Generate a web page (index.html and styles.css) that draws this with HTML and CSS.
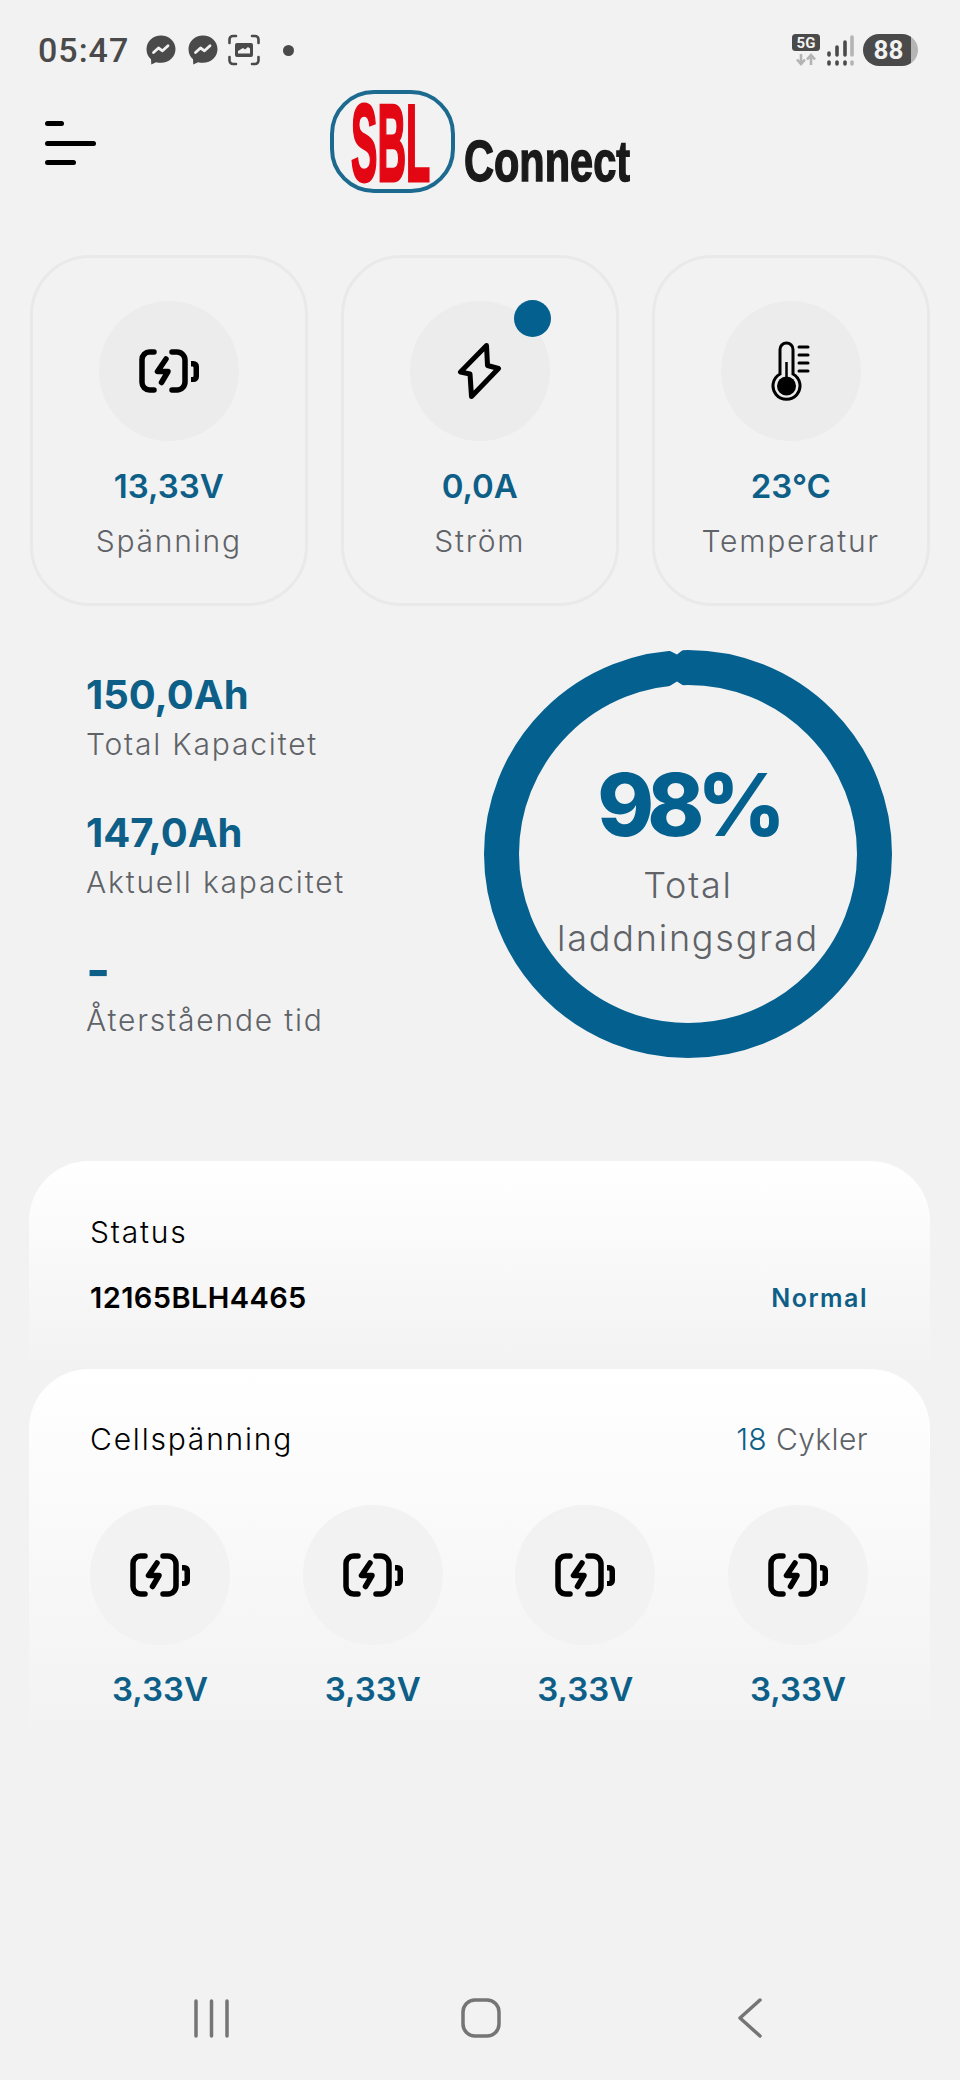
FILE: index.html
```html
<!DOCTYPE html>
<html lang="sv">
<head>
    <meta charset="UTF-8">
    <meta name="viewport" content="width=device-width, initial-scale=1.0">
    <title>SBL Connect</title>
    <link rel="stylesheet" href="styles.css">
</head>
<body>
    <svg class="defs" width="0" height="0">
        <symbol id="battery" viewBox="0 0 60 44">
            <g fill="none" stroke="#000" stroke-width="5.500" stroke-linecap="round" stroke-linejoin="round">
                <path d="M15 3H10.500A7.500 7.500 0 0 0 3 10.500V33.500A7.500 7.500 0 0 0 10.500 41H15"/>
                <path d="M33 3H38A8 8 0 0 1 46 11V33A8 8 0 0 1 38 41H33"/>
                <path d="M27 10L18.500 22.500H29L22.500 33.500"/>
            </g>
            <path d="M52 12h2.500a5.500 5.500 0 0 1 5.500 5.500v10a5.500 5.500 0 0 1-5.500 5.500H52v-5h1.500a1 1 0 0 0 1-1v-8.500a1 1 0 0 0-1-1H52z"/>
        </symbol>
        <symbol id="messenger" viewBox="0 0 30 30">
            <path fill="#4a4a4a" d="M15 0.500C6.800 0.500 0.500 6.500 0.500 14.200c0 4.100 1.700 7.600 4.500 10l0.300 5.300 4.800-2.300c1.500 0.400 3.100 0.600 4.900 0.600 8.200 0 14.500-6 14.500-13.700S23.200 0.500 15 0.500z"/>
            <path fill="none" stroke="#f2f2f2" stroke-width="2.800" stroke-linecap="round" stroke-linejoin="round" d="M7.500 17.500l5-4.500 4 2.800 5.500-5"/>
        </symbol>
    </svg>

    <div class="status-bar">
        <span class="clock">05:47</span>
        <svg class="msg-icon"><use href="#messenger"/></svg>
        <svg class="msg-icon"><use href="#messenger"/></svg>
        <svg class="shot-icon" viewBox="0 0 32 32">
            <g fill="none" stroke="#4a4a4a" stroke-width="2.600" stroke-linecap="round">
                <path d="M8 2H5A3.500 3.500 0 0 0 1.500 5.500V9"/>
                <path d="M24 2H27A3.500 3.500 0 0 1 30.500 5.500V9"/>
                <path d="M8 30H5A3.500 3.500 0 0 1 1.500 26.500V23"/>
                <path d="M24 30H27A3.500 3.500 0 0 0 30.500 26.500V23"/>
            </g>
            <path fill="#4a4a4a" fill-rule="evenodd" d="M9 9h14a2 2 0 0 1 2 2v10a2 2 0 0 1-2 2H9a2 2 0 0 1-2-2V11a2 2 0 0 1 2-2zm1 10.500h12v-5l-2-1.500-3 2.500-2-1.500-5 3z"/>
        </svg>
        <span class="dot"></span>
        <span class="status-right">
            <svg class="net-icon" viewBox="0 0 28 32">
                <rect width="28" height="17" rx="3.500" fill="#4a4a4a"/>
                <text x="14" y="14" text-anchor="middle" class="net-text">5G</text>
                <path fill="none" stroke="#b4b4b4" stroke-width="2.600" d="M9 20v10M5 25.500l4 4.500 4-4.500M19 31V21M15 25.500l4-4.500 4 4.500"/>
            </svg>
            <svg class="signal-icon" viewBox="0 0 28 31">
                <g fill="none" stroke-width="3.600" stroke-linecap="round">
                    <path stroke="#4a4a4a" d="M3 18v2M3 27v2M11 12v8M11 27v2M19 7v13M19 27v2"/>
                    <path stroke="#b4b4b4" d="M26 2v18M26 27v2"/>
                </g>
            </svg>
            <span class="battery-pill">88</span>
        </span>
    </div>

    <header class="app-header">
        <div class="menu-btn">
            <span class="menu-line short"></span>
            <span class="menu-line"></span>
            <span class="menu-line mid"></span>
        </div>
        <svg class="logo" viewBox="0 -12 300 130">
            <rect x="2" y="2" width="121" height="99" rx="42" fill="none" stroke="#1c6a8f" stroke-width="4"/>
            <text transform="translate(21 91) scale(0.36 1)" class="logo-sbl">SBL</text>
            <text transform="translate(134 91) scale(0.716 1)" class="logo-connect">Connect</text>
        </svg>
    </header>

    <section class="cards">
        <div class="card">
            <div class="icon-circle"><svg class="battery-icon"><use href="#battery"/></svg></div>
            <div class="card-value">13,33V</div>
            <div class="card-label">Spänning</div>
        </div>
        <div class="card">
            <span class="badge"></span>
            <div class="icon-circle">
                <svg class="bolt-icon" viewBox="0 0 45 60">
                    <path fill="none" stroke="#000" stroke-width="5" stroke-linejoin="round" d="M29.500 4.500L3.500 31 13 33 14.500 55.500 41.500 27.500 30.500 24.500z"/>
                </svg>
            </div>
            <div class="card-value">0,0A</div>
            <div class="card-label">Ström</div>
        </div>
        <div class="card">
            <div class="icon-circle">
                <svg class="temp-icon" viewBox="0 0 39 60">
                    <path fill="none" stroke="#000" stroke-width="3" d="M9 33V8.500a6.500 6.500 0 0 1 13 0V33a13.500 13.500 0 1 1-13 0z"/>
                    <circle cx="15.500" cy="45" r="9.500"/>
                    <path stroke="#000" stroke-width="2.500" d="M15.500 21V40"/>
                    <path stroke="#000" stroke-width="3" stroke-linecap="round" d="M28 6h9M28 14h9M28 22h9M28 30h9"/>
                </svg>
            </div>
            <div class="card-value">23°C</div>
            <div class="card-label">Temperatur</div>
        </div>
    </section>

    <section class="overview">
        <div class="stats">
            <div class="stat">
                <div class="stat-value">150,0Ah</div>
                <div class="stat-label">Total Kapacitet</div>
            </div>
            <div class="stat">
                <div class="stat-value">147,0Ah</div>
                <div class="stat-label">Aktuell kapacitet</div>
            </div>
            <div class="stat">
                <div class="stat-value stat-empty">-</div>
                <div class="stat-label">Återstående tid</div>
            </div>
        </div>
        <div class="ring">
            <svg class="ring-svg" viewBox="0 0 408 408">
                <circle cx="204" cy="204" r="186.500" fill="none" stroke="#03608f" stroke-width="35"/>
                <path fill="#f2f2f2" d="M182 -1L193 4.500 200 -1zM184 37L193 31.500 200 36 200 40 184 40z"/>
            </svg>
            <div class="ring-value">98%</div>
            <div class="ring-label">Total<br>laddningsgrad</div>
        </div>
    </section>

    <section class="panel status-panel">
        <div class="panel-title">Status</div>
        <div class="panel-row">
            <span class="serial">12165BLH4465</span>
            <span class="state">Normal</span>
        </div>
    </section>

    <section class="panel cell-panel">
        <div class="panel-row cell-head">
            <span class="panel-title">Cellspänning</span>
            <span class="cycles"><span class="cycles-num">18</span> Cykler</span>
        </div>
        <div class="cells">
            <div class="cell">
                <div class="icon-circle light"><svg class="battery-icon"><use href="#battery"/></svg></div>
                <div class="cell-value">3,33V</div>
            </div>
            <div class="cell">
                <div class="icon-circle light"><svg class="battery-icon"><use href="#battery"/></svg></div>
                <div class="cell-value">3,33V</div>
            </div>
            <div class="cell">
                <div class="icon-circle light"><svg class="battery-icon"><use href="#battery"/></svg></div>
                <div class="cell-value">3,33V</div>
            </div>
            <div class="cell">
                <div class="icon-circle light"><svg class="battery-icon"><use href="#battery"/></svg></div>
                <div class="cell-value">3,33V</div>
            </div>
        </div>
    </section>

    <nav class="nav-bar">
        <svg class="nav-recent" viewBox="0 0 37 40">
            <path fill="none" stroke="#757575" stroke-width="3.500" stroke-linecap="round" d="M3 3V38M18.500 3V38M34 3V38"/>
        </svg>
        <svg class="nav-home" viewBox="0 0 40 40">
            <rect x="2" y="2" width="36" height="36" rx="12" fill="none" stroke="#757575" stroke-width="3.500"/>
        </svg>
        <svg class="nav-back" viewBox="0 0 32 40">
            <path fill="none" stroke="#757575" stroke-width="3.500" stroke-linecap="round" stroke-linejoin="round" d="M28 2L8 20 28 38"/>
        </svg>
    </nav>
</body>
</html>
```
FILE: styles.css
```css
* {
    box-sizing: border-box;
}
body {
    margin: 0;
    width: 960px;
    height: 2080px;
    display: flex;
    flex-direction: column;
    background-color: #f2f2f2;
    font-family: Inter, "Open Sans", sans-serif;
    overflow: hidden;
}
.defs {
    position: absolute;
}
.status-bar {
    height: 66px;
    padding: 34px 42px 0 38px;
    display: flex;
    align-items: center;
    color: #4a4a4a;
}
.clock {
    font-family: Roboto, sans-serif;
    font-size: 34px;
    font-weight: 500;
    letter-spacing: 1px;
    width: 90px;
    line-height: 32px;
}
.msg-icon {
    width: 30px;
    height: 30px;
    margin-left: 18px;
}
.msg-icon + .msg-icon {
    margin-left: 12px;
}
.shot-icon {
    width: 32px;
    height: 32px;
    margin-left: 10px;
}
.dot {
    width: 11px;
    height: 11px;
    margin-left: 23px;
    border-radius: 50%;
    background-color: #4a4a4a;
}
.status-right {
    margin-left: auto;
    display: flex;
    align-items: center;
}
.net-icon {
    width: 28px;
    height: 32px;
}
.net-text {
    font-family: Roboto, sans-serif;
    font-size: 15px;
    font-weight: 700;
    fill: #f2f2f2;
}
.signal-icon {
    width: 28px;
    height: 31px;
    margin-left: 6px;
}
.battery-pill {
    width: 55px;
    height: 32px;
    margin-left: 9px;
    padding-right: 4px;
    border-radius: 16px;
    background: linear-gradient(to right, #4a4a4a 87%, #b5b5b5 87%);
    color: #f2f2f2;
    font-family: Roboto, sans-serif;
    font-size: 26px;
    font-weight: 700;
    line-height: 32px;
    text-align: center;
}
.app-header {
    margin-top: 24px;
    height: 103px;
    padding-left: 45px;
    display: flex;
    align-items: flex-start;
    gap: 234px;
}
.menu-btn {
    width: 51px;
    padding-top: 31px;
    display: flex;
    flex-direction: column;
    gap: 14.500px;
}
.menu-line {
    display: block;
    width: 51px;
    height: 5px;
    border-radius: 3px;
    background-color: #000;
}
.menu-line.short {
    width: 19px;
}
.menu-line.mid {
    width: 31px;
}
.logo {
    width: 300px;
    height: 130px;
    margin-top: -12px;
}
.logo-sbl {
    font-family: "Liberation Sans", sans-serif;
    font-size: 110px;
    font-weight: 700;
    fill: #e30613;
    stroke: #e30613;
    stroke-width: 3px;
}
.logo-connect {
    font-family: "Liberation Sans", sans-serif;
    font-size: 58px;
    font-weight: 700;
    fill: #1a1a1a;
    stroke: #1a1a1a;
    stroke-width: 1.500px;
}
.cards {
    margin-top: 62px;
    padding-left: 30px;
    display: grid;
    grid-template-columns: repeat(3, 277.500px);
    gap: 33.500px;
}
.card {
    position: relative;
    height: 351px;
    padding-top: 43px;
    border: 3px solid #e9e9e9;
    border-radius: 60px;
    display: flex;
    flex-direction: column;
    align-items: center;
}
.icon-circle {
    width: 140px;
    height: 140px;
    border-radius: 50%;
    background-color: #ececec;
    display: flex;
    align-items: center;
    justify-content: center;
}
.icon-circle.light {
    background-color: #f2f2f2;
}
.battery-icon {
    width: 60px;
    height: 44px;
}
.bolt-icon {
    width: 45px;
    height: 60px;
}
.temp-icon {
    width: 39px;
    height: 60px;
}
.badge {
    position: absolute;
    top: 42px;
    right: 65px;
    width: 37px;
    height: 37px;
    border-radius: 50%;
    background-color: #03608f;
}
.card-value {
    margin-top: 23px;
    font-size: 33px;
    font-weight: 600;
    line-height: 44px;
    color: #0d5f88;
}
.card-label {
    margin-top: 13px;
    font-size: 30px;
    font-weight: 300;
    letter-spacing: 1.800px;
    line-height: 40px;
    color: #5f6368;
}
.overview {
    margin-top: 44px;
    padding-left: 86px;
    height: 408px;
    display: flex;
    justify-content: space-between;
    padding-right: 68px;
}
.stats {
    padding-top: 17px;
}
.stat {
    height: 138px;
}
.stat-value {
    font-size: 40px;
    font-weight: 700;
    line-height: 56px;
    color: #0d5f88;
}
.stat-empty {
    font-size: 52px;
    font-weight: 700;
}
.stat-label {
    margin-top: 1px;
    font-size: 30px;
    font-weight: 300;
    letter-spacing: 1.800px;
    line-height: 40px;
    color: #5f6368;
}
.ring {
    position: relative;
    width: 408px;
    height: 408px;
    padding-top: 105px;
    text-align: center;
}
.ring-svg {
    position: absolute;
    top: 0;
    left: 0;
    width: 408px;
    height: 408px;
}
.ring-value {
    position: relative;
    font-size: 86px;
    font-weight: 800;
    letter-spacing: -7px;
    line-height: 100px;
    color: #03608f;
}
.ring-label {
    position: relative;
    margin-top: 4px;
    font-size: 36px;
    font-weight: 300;
    letter-spacing: 1.800px;
    line-height: 53px;
    color: #5f6368;
}
.panel {
    margin: 0 30px 0 29px;
    padding: 0 62px 0 61px;
    border-radius: 60px 60px 0 0;
    background: linear-gradient(to bottom, #fff 0%, #f2f2f2 100%);
}
.status-panel {
    margin-top: 103px;
    height: 208px;
    padding-top: 51px;
}
.cell-panel {
    height: 371px;
    padding-top: 50px;
}
.panel-title {
    font-size: 30px;
    font-weight: 300;
    letter-spacing: 1.800px;
    line-height: 40px;
    color: #000;
}
.panel-row {
    margin-top: 26px;
    display: flex;
    justify-content: space-between;
    align-items: center;
    line-height: 40px;
}
.cell-head {
    margin-top: 0;
}
.serial {
    font-size: 29px;
    font-weight: 600;
    letter-spacing: 0.400px;
    color: #000;
}
.state {
    font-size: 25px;
    font-weight: 600;
    letter-spacing: 1.500px;
    color: #0d5f88;
}
.cycles {
    font-size: 30px;
    font-weight: 300;
    letter-spacing: 0.400px;
    color: #5f6368;
}
.cycles-num {
    color: #0d5f88;
}
.cells {
    margin-top: 46px;
    display: flex;
    justify-content: space-between;
}
.cell {
    width: 140px;
    text-align: center;
}
.cell-value {
    margin-top: 24px;
    font-size: 33px;
    font-weight: 600;
    line-height: 40px;
    color: #0d5f88;
}
.nav-bar {
    margin-top: auto;
    padding: 0 0 42px 193px;
    display: flex;
    align-items: center;
}
.nav-recent {
    width: 37px;
    height: 40px;
}
.nav-home {
    width: 40px;
    height: 40px;
    margin-left: 231px;
}
.nav-back {
    width: 32px;
    height: 40px;
    margin-left: 231px;
}
```
